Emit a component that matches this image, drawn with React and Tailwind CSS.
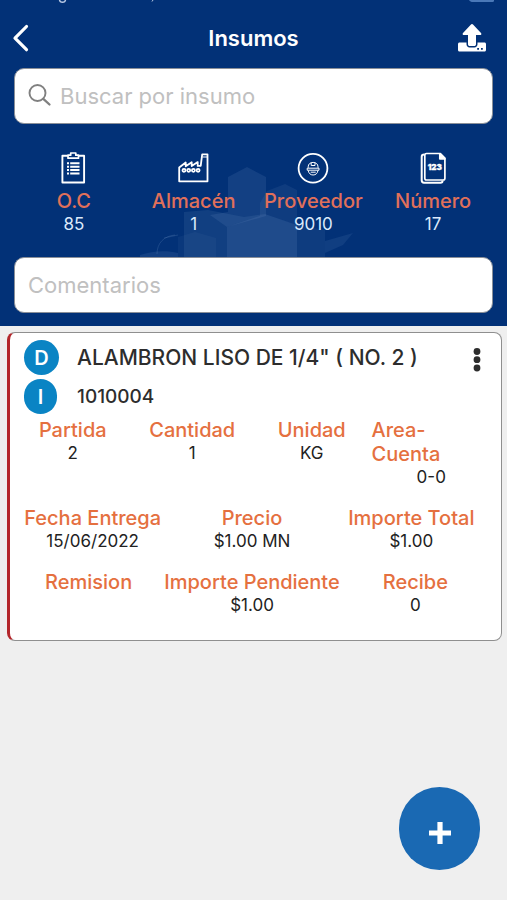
import { useState } from 'react';

const UploadIcon = () => (
    <svg viewBox="0 0 28 28" className="w-7 h-7" fill="currentColor" aria-hidden="true">
        <path d="M13 .5a1.400 1.400 0 0 1 2 0l8 8.600c.7.8.3 1.900-.8 1.900H18v9.200c0 1-.7 1.800-1.800 1.800h-4.400c-1.100 0-1.800-.8-1.800-1.800V11H5.800c-1.100 0-1.500-1.100-.8-1.900z" />
        <path fillRule="evenodd" d="M1.500 18.500H8.500v1.800c0 1.900 1.300 3.100 3.100 3.100h4.800c1.800 0 3.100-1.200 3.100-3.100v-1.800h7c.8 0 1.500.6 1.500 1.500v6c0 .9-.6 1.500-1.500 1.500h-25c-.9 0-1.500-.6-1.500-1.500v-6c0-.9.700-1.500 1.500-1.500zM19.200 24.100v1.700h1.800v-1.700zm3.800 0v1.700h1.800v-1.700z" />
    </svg>
);

const ClipboardIcon = () => (
    <svg viewBox="0 0 32 32" className="w-8 h-8" fill="none" stroke="currentColor" strokeWidth="1.900" strokeLinejoin="round" aria-hidden="true">
        <path d="M9.800 3.800H4.400v26.700h21.700V3.800h-5.300" />
        <path d="M10 6.200h10.500V3.200h-2.700V1h-5.100v2.200H10z" strokeWidth="1.700" />
        <path d="M9 11.300h2M9 14.700h2M9 18.100h2M9 21.500h2M12.200 11.300h9.300M12.200 14.700h9.300M12.200 18.100h9.300M12.200 21.500h9.300" strokeWidth="2" />
    </svg>
);

const FactoryIcon = () => (
    <svg viewBox="0 0 32 32" className="w-8 h-8" fill="none" stroke="currentColor" strokeWidth="1.800" strokeLinejoin="round" aria-hidden="true">
        <path d="M1.200 29.300V15.500l6.500-5v3.800l6-4v3.800l6-4v3.800h3L24.200 2.300h5.300v27z" />
        <path d="M24.400 5h4.600" strokeWidth="1" />
        <circle cx="6" cy="18.300" r="1.500" />
        <circle cx="10.700" cy="18.300" r="1.500" />
        <circle cx="15.400" cy="18.300" r="1.500" />
        <circle cx="20.100" cy="18.300" r="1.500" />
    </svg>
);

const WorkerIcon = () => (
    <svg viewBox="0 0 32 32" className="w-8 h-8" fill="none" stroke="currentColor" strokeWidth="1" strokeLinejoin="round" aria-hidden="true">
        <circle cx="16" cy="16.300" r="14.400" strokeWidth="1.800" />
        <path d="M11.200 15.800v-1c0-2.700 2-4.400 4.900-4.400s4.900 1.700 4.900 4.400v1M14.200 10.800v2.700h3.800v-2.700M10.200 16.200h11.800v2H10.200zM11.300 18.500c.3 2.800 2.200 4.500 4.800 4.500s4.500-1.700 4.800-4.500" />
        <path d="M13.700 20.200h5" />
    </svg>
);

const NumberIcon = () => (
    <svg viewBox="0 0 32 32" className="w-8 h-8" fill="none" stroke="currentColor" strokeWidth="1.700" strokeLinejoin="round" aria-hidden="true">
        <path d="M9.500 1.500h13.900l4.500 4.500v20.300c0 1.100-.6 1.700-1.700 1.700H9.500c-1.100 0-1.700-.6-1.700-1.700V3.200c0-1.100.6-1.700 1.700-1.700z" />
        <path d="M22.800 1.800v5h5z" fill="currentColor" />
        <path d="M7.200 2.500c-1.600 0-2.500.7-2.500 2.200v23.600c0 1.600.8 2.400 2.300 2.400h16.500c1.300 0 2.100-.8 2.100-2.200" strokeWidth="2" />
        <text x="17.800" y="18.300" fontSize="8" fontWeight="900" textAnchor="middle" fill="currentColor" stroke="currentColor" strokeWidth=".3">123</text>
    </svg>
);

const HexBackdrop = () => (
    <svg viewBox="0 0 230 120" className="absolute bottom-12 left-1/2 -ml-[118px] w-[230px] h-[120px]" fill="#7f9fcc" aria-hidden="true">
        <path d="M92 19l19-10 19 10v39l-39 11-17-12 18-3z" opacity=".14" />
        <path d="M124 45l7-12 18-7 12 6v35l-32-11-5 2z" opacity=".11" />
        <path d="M48 54l24-2 36 7 21-3-38 13v51H48z" opacity=".13" />
        <path d="M91 69l38-13 32 11v53H91z" opacity=".24" />
        <path d="M42 79l17-5 21 6v40H42z" opacity=".07" />
        <path d="M4 97c12-4 26-5 38-2v25H4z" opacity=".14" />
        <path d="M21 96c0-11 7-18 18-19M28 80l14-3" fill="none" stroke="#7f9fcc" opacity=".2" />
        <path d="M161 67l28 5v48h-28z" opacity=".1" />
        <path d="M189 83l28-8-10 12-18 8z" opacity=".12" />
    </svg>
);

const summary = [
    { label: 'O.C', value: '85', Icon: ClipboardIcon },
    { label: 'Almacén', value: '1', Icon: FactoryIcon },
    { label: 'Proveedor', value: '9010', Icon: WorkerIcon },
    { label: 'Número', value: '17', Icon: NumberIcon },
];

const item = {
    description: 'ALAMBRON LISO DE 1/4" ( NO. 2 )',
    code: '1010004',
    rows: [
        [
            { label: 'Partida', value: '2' },
            { label: 'Cantidad', value: '1' },
            { label: 'Unidad', value: 'KG' },
            { label: 'Area-Cuenta', value: '0-0', wrap: true },
        ],
        [
            { label: 'Fecha Entrega', value: '15/06/2022' },
            { label: 'Precio', value: '$1.00 MN' },
            { label: 'Importe Total', value: '$1.00' },
        ],
        [
            { label: 'Remision', value: '' },
            { label: 'Importe Pendiente', value: '$1.00' },
            { label: 'Recibe', value: '0' },
        ],
    ],
};

const Field = ({ label, value, wrap }) => (
    <div className="flex-1 flex flex-col items-center">
        <dt className={wrap ? 'w-full text-left text-[20px] leading-6 font-medium text-[#e5703f]' : 'whitespace-nowrap text-[20px] leading-6 font-medium text-[#e5703f]'}>
            {label}
        </dt>
        <dd className="h-[22px] text-[17px] leading-[22px] text-[#222222]">{value}</dd>
    </div>
);

const ItemCard = ({ data }) => (
    <article className="ml-[7px] mr-[5px] mt-[6px] rounded-lg border border-[#8f8f8f] border-l-[3px] border-l-[#b3262b] bg-white pl-[3px] pr-[10px] pt-[7px] pb-6">
        <div className="flex items-start pl-[11px]">
            <div className="flex flex-col gap-1">
                <span className="w-[35px] h-[35px] rounded-full bg-[#0a84c4] text-white text-[20px] leading-6 font-semibold flex items-center justify-center">D</span>
                <span className="w-[33px] h-[35px] rounded-full bg-[#0a84c4] text-white text-[20px] leading-6 font-semibold flex items-center justify-center">I</span>
            </div>
            <div className="flex-1 pl-[18px] text-[#2d2d2d] font-medium">
                <h2 className="text-[21px] leading-[35px] whitespace-nowrap">{data.description}</h2>
                <p className="mt-1 text-[19px] leading-[35px]">{data.code}</p>
            </div>
            <button type="button" aria-label="Opciones" className="mt-2 mr-[10px] text-[#2d2d2d]">
                <svg viewBox="0 0 8 24" className="w-2 h-6" fill="currentColor" aria-hidden="true">
                    <circle cx="4" cy="3.500" r="3.400" />
                    <circle cx="4" cy="11.700" r="3.400" />
                    <circle cx="4" cy="20" r="3.400" />
                </svg>
            </button>
        </div>
        <div className="mt-1 flex flex-col gap-[18px]">
            {data.rows.map((row, i) => (
                <dl key={i} className="flex">
                    {row.map(f => (
                        <Field key={f.label} {...f} />
                    ))}
                </dl>
            ))}
        </div>
    </article>
);

export default function App() {
    const [search, setSearch] = useState('');
    const [comments, setComments] = useState('');

    return (
        <div className="min-h-screen bg-[#efefef] font-['Inter','Liberation_Sans',sans-serif]">
            <header className="relative overflow-hidden bg-[#023177] px-[14px] pt-4 pb-[13px] text-white">
                {/* lower edge of the phone's status bar */}
                <svg viewBox="0 0 480 4" className="absolute top-0 left-[14px] w-[480px] h-1" fill="none" aria-hidden="true">
                    <path d="M45.500 0c.5 3 5.500 3 6 0" stroke="#b9c9e4" strokeWidth="1.500" />
                    <path d="M139 0l-1 1.500" stroke="#b9c9e4" />
                    <path d="M455 0h26c-1 1.500-2 2-4 2h-18c-2 0-3-.5-4-2z" fill="#4a78b8" />
                </svg>
                <HexBackdrop />
                <div className="relative grid grid-cols-[1fr_auto_1fr] items-center h-[44px]">
                    <button type="button" aria-label="Regresar" className="justify-self-start -ml-[2px]">
                        <svg viewBox="0 0 18 28" className="w-[18px] h-7" fill="none" stroke="currentColor" strokeWidth="3.200" strokeLinecap="round" strokeLinejoin="round" aria-hidden="true">
                            <path d="M14.500 2.500L3 14.200l11.500 11.500" />
                        </svg>
                    </button>
                    <h1 className="text-[22px] leading-7 font-semibold">Insumos</h1>
                    <button type="button" aria-label="Subir" className="justify-self-end mr-[7px]">
                        <UploadIcon />
                    </button>
                </div>

                <label className="relative mt-2 flex items-center h-[56px] rounded-[10px] border border-[#8a8f98] bg-white pl-[13px] pr-3">
                    <svg viewBox="0 0 24 24" className="w-6 h-6 text-[#808080]" fill="none" stroke="currentColor" strokeWidth="1.900" strokeLinecap="round" aria-hidden="true">
                        <circle cx="9.500" cy="9" r="8" />
                        <path d="M15.300 14.800L21.500 20.500" strokeWidth="2.300" />
                    </svg>
                    <input
                        type="search"
                        aria-label="Buscar por insumo"
                        placeholder="Buscar por insumo"
                        value={search}
                        onChange={e => setSearch(e.target.value)}
                        className="flex-1 min-w-0 ml-2 bg-transparent text-[22px] leading-7 text-[#2d2d2d] placeholder:text-[#c0c0c0] outline-none"
                    />
                </label>

                <ul className="relative mt-7 flex">
                    {summary.map(({ label, value, Icon }) => (
                        <li key={label} className="flex-1 flex flex-col items-center">
                            <Icon />
                            <span className="mt-[5px] text-[20px] leading-6 font-medium text-[#e0705a]">{label}</span>
                            <span className="text-[17px] leading-[22px] text-[#dbe9fb]">{value}</span>
                        </li>
                    ))}
                </ul>

                <input
                    type="text"
                    aria-label="Comentarios"
                    placeholder="Comentarios"
                    value={comments}
                    onChange={e => setComments(e.target.value)}
                    className="relative block mt-[22px] w-full h-[56px] rounded-[10px] border border-[#8a8f98] bg-white px-[13px] text-[22px] leading-7 text-[#2d2d2d] placeholder:text-[#c0c0c0] outline-none"
                />
            </header>

            <main>
                <ItemCard data={item} />
            </main>

            <button type="button" aria-label="Agregar" className="fixed right-[27px] bottom-[30px] w-[81px] h-[83px] rounded-full bg-[#1a69b3] text-white flex items-center justify-center">
                <svg viewBox="0 0 24 24" className="w-6 h-6 mt-2" stroke="currentColor" strokeWidth="5.200" aria-hidden="true">
                    <path d="M12 1v22M1 12h22" />
                </svg>
            </button>
        </div>
    );
}
